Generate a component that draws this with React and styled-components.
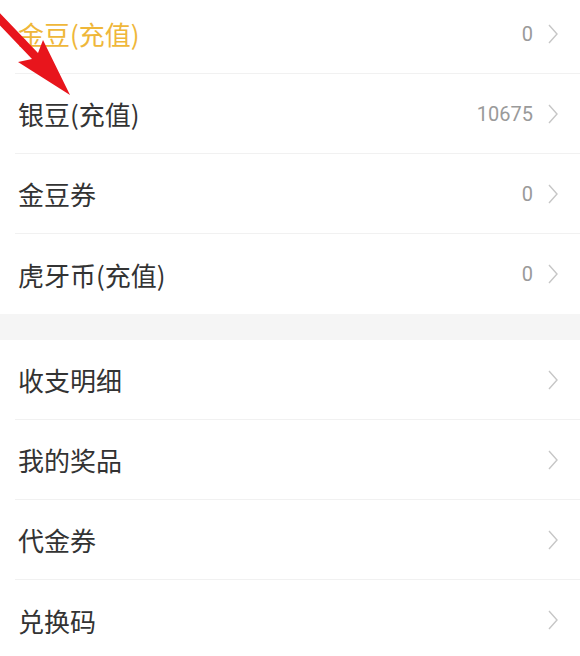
import styled, { createGlobalStyle } from 'styled-components';

const GlobalStyle = createGlobalStyle`
  html, body {
    margin: 0;
    padding: 0;
    background: #fff;
    overflow: hidden;
  }
  body {
    font-family: Roboto, "Noto Sans CJK SC", sans-serif;
  }
`;

const wallet = [
  { label: '金豆(充值)', value: '0', gold: true },
  { label: '银豆(充值)', value: '10675' },
  { label: '金豆券', value: '0' },
  { label: '虎牙币(充值)', value: '0' },
];

const records = [
  { label: '收支明细' },
  { label: '我的奖品' },
  { label: '代金券' },
  { label: '兑换码' },
];

export default function App() {
  return (
    <>
      <GlobalStyle />
      <Page>
        <Group>
          {wallet.map((item) => (
            <Item key={item.label} {...item} />
          ))}
        </Group>
        <Gap />
        <Group>
          {records.map((item) => (
            <Item key={item.label} {...item} />
          ))}
        </Group>
        <Pointer viewBox="0 0 100 110" aria-hidden="true">
          <polygon points="-7,6 38,53 43,40 70,95 18,62 32,59 -13,12" fill="#e8151c" />
        </Pointer>
      </Page>
    </>
  );
}

function Item({ label, value, gold }) {
  return (
    <Row>
      <Label $gold={gold}>{label}</Label>
      <Right>
        {value && <Value>{value}</Value>}
        <Chevron viewBox="0 0 10 20" aria-hidden="true">
          <polyline points="1,1 9,10 1,19" fill="none" stroke="#c6c6c6" strokeWidth="1.4" />
        </Chevron>
      </Right>
    </Row>
  );
}

const Page = styled.div`
  position: relative;
  width: 580px;
  margin-top: -6px;
  background: #fff;
`;

const Group = styled.div`
  display: flex;
  flex-direction: column;
`;

const Gap = styled.div`
  height: 26px;
  background: #f5f5f5;
`;

const Row = styled.div`
  box-sizing: border-box;
  height: 80px;
  margin-left: 15px;
  padding: 0 22px 0 3px;
  display: flex;
  align-items: center;
  justify-content: space-between;
  border-bottom: 1px solid #f1f1f1;

  &:last-child {
    border-bottom: none;
  }
`;

const Label = styled.span`
  font-family: "Noto Sans CJK SC", sans-serif;
  font-size: 26px;
  color: ${(p) => (p.$gold ? '#efb73a' : '#333')};
`;

const Right = styled.div`
  display: flex;
  align-items: center;
  gap: 15px;
`;

const Value = styled.span`
  font-family: Roboto, sans-serif;
  font-size: 20px;
  color: #9a9a9a;
`;

const Chevron = styled.svg`
  width: 10px;
  height: 20px;
  display: block;
`;

const Pointer = styled.svg`
  position: absolute;
  left: 0;
  top: 6px;
  width: 100px;
  height: 110px;
  overflow: visible;
`;
